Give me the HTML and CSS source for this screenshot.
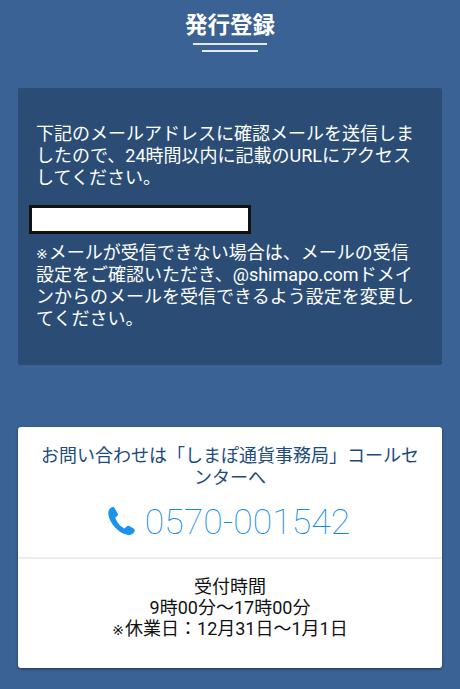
FILE: index.html
```html
<!DOCTYPE html>
<html lang="ja">
<head>
<meta charset="utf-8">
<title>発行登録</title>
<link rel="stylesheet" href="styles.css">
</head>
<body>
<header class="head">
  <h1 class="title">発行登録</h1>
  <div class="rule rule-long"></div>
  <div class="rule rule-short"></div>
</header>
<section class="notice">
  <p class="notice-text">下記のメールアドレスに確認メールを送信しましたので、24時間以内に記載のURLにアクセスしてください。</p>
  <div class="mailbox"></div>
  <p class="notice-text"><span class="mark">※</span>メールが受信できない場合は、メールの受信設定をご確認いただき、@shimapo.comドメインからのメールを受信できるよう設定を変更してください。</p>
</section>
<section class="card">
  <div class="card-top">
    <p class="card-lead">お問い合わせは「しまぽ通貨事務局」コールセンターへ</p>
    <div class="phone">
      <svg class="phone-icon" viewBox="2.4 0.9 21.4 22.5" aria-hidden="true"><path d="M5.2 1.2 C6 .7 7 .9 7.5 1.7 L10 5.9 C10.4 6.7 10.3 7.6 9.6 8.2 L8 9.6 C8.8 11.6 9.9 13.4 11.2 14.9 C12.5 16.3 14 17.4 15.6 18.1 L17.2 16.5 C17.8 15.9 18.7 15.8 19.4 16.2 L23 18.3 C23.7 18.8 24 19.6 23.6 20.4 C22.9 22 21.4 23.2 19.6 23.3 C16 23.5 11.6 21.3 8.2 17.6 C4.6 13.7 2.3 8.8 2.5 5.2 C2.6 3.6 3.6 2.1 5.2 1.2 Z"/></svg>
      <span class="phone-num">0570-001542</span>
    </div>
  </div>
  <div class="card-bottom">
    <p>受付時間</p>
    <p>9時00分～17時00分</p>
    <p><span class="mark">※</span>休業日：12月31日～1月1日</p>
  </div>
</section>
</body>
</html>
```
FILE: styles.css
```css
* { box-sizing: border-box; }
html, body { margin: 0; padding: 0; }
body {
  width: 460px;
  height: 689px;
  overflow: hidden;
  background: #3a6295;
  font-family: Roboto, "Noto Sans CJK JP", sans-serif;
  padding: 0 18px;
}
p { margin: 0; }
.mark { display: inline-block; margin-right: 1px; font-family: "DejaVu Sans", sans-serif; font-size: 14px; line-height: 1; }
.head { display: flex; flex-direction: column; align-items: center; padding-top: 10px; }
.title {
  margin: 0;
  font-size: 22.5px;
  line-height: 30px;
  font-weight: 700;
  color: #fff;
}
.rule { height: 2px; background: #e8e8e8; }
.rule-long { width: 74px; margin-top: 3px; }
.rule-short { width: 56px; margin-top: 5px; }
.notice {
  margin-top: 36px;
  height: 277px;
  padding: 35px 18px 0;
  background: #2b4d75;
  border-radius: 2px;
  color: #fff;
}
.notice-text { font-size: 18px; line-height: 22px; }
.mailbox {
  width: 222px;
  height: 29px;
  margin: 16px 0 8px -7px;
  background: #fff;
  border: 3px solid #111;
}
.card {
  margin-top: 62px;
  height: 241px;
  background: #fff;
  border-radius: 3px;
  box-shadow: 0 1px 3px rgba(0, 0, 0, .45);
}
.card-top {
  height: 132px;
  padding: 18px 18px 0;
  text-align: center;
  border-bottom: 2px solid #eceeef;
}
.card-lead { font-size: 18px; line-height: 22px; color: #1d4a7c; }
.phone { display: flex; justify-content: center; align-items: center; gap: 10px; margin: 11px 2px 0 0; }
.phone-icon { width: 27px; height: 28px; fill: #1b93ea; flex: none; margin-top: -2px; }
.phone-num { font-size: 35.6px; line-height: 44px; font-weight: 100; color: #0f8ce8; }
.card-bottom {
  padding-top: 17px;
  text-align: center;
  color: #111;
  font-size: 18px;
  line-height: 21px;
}
```
